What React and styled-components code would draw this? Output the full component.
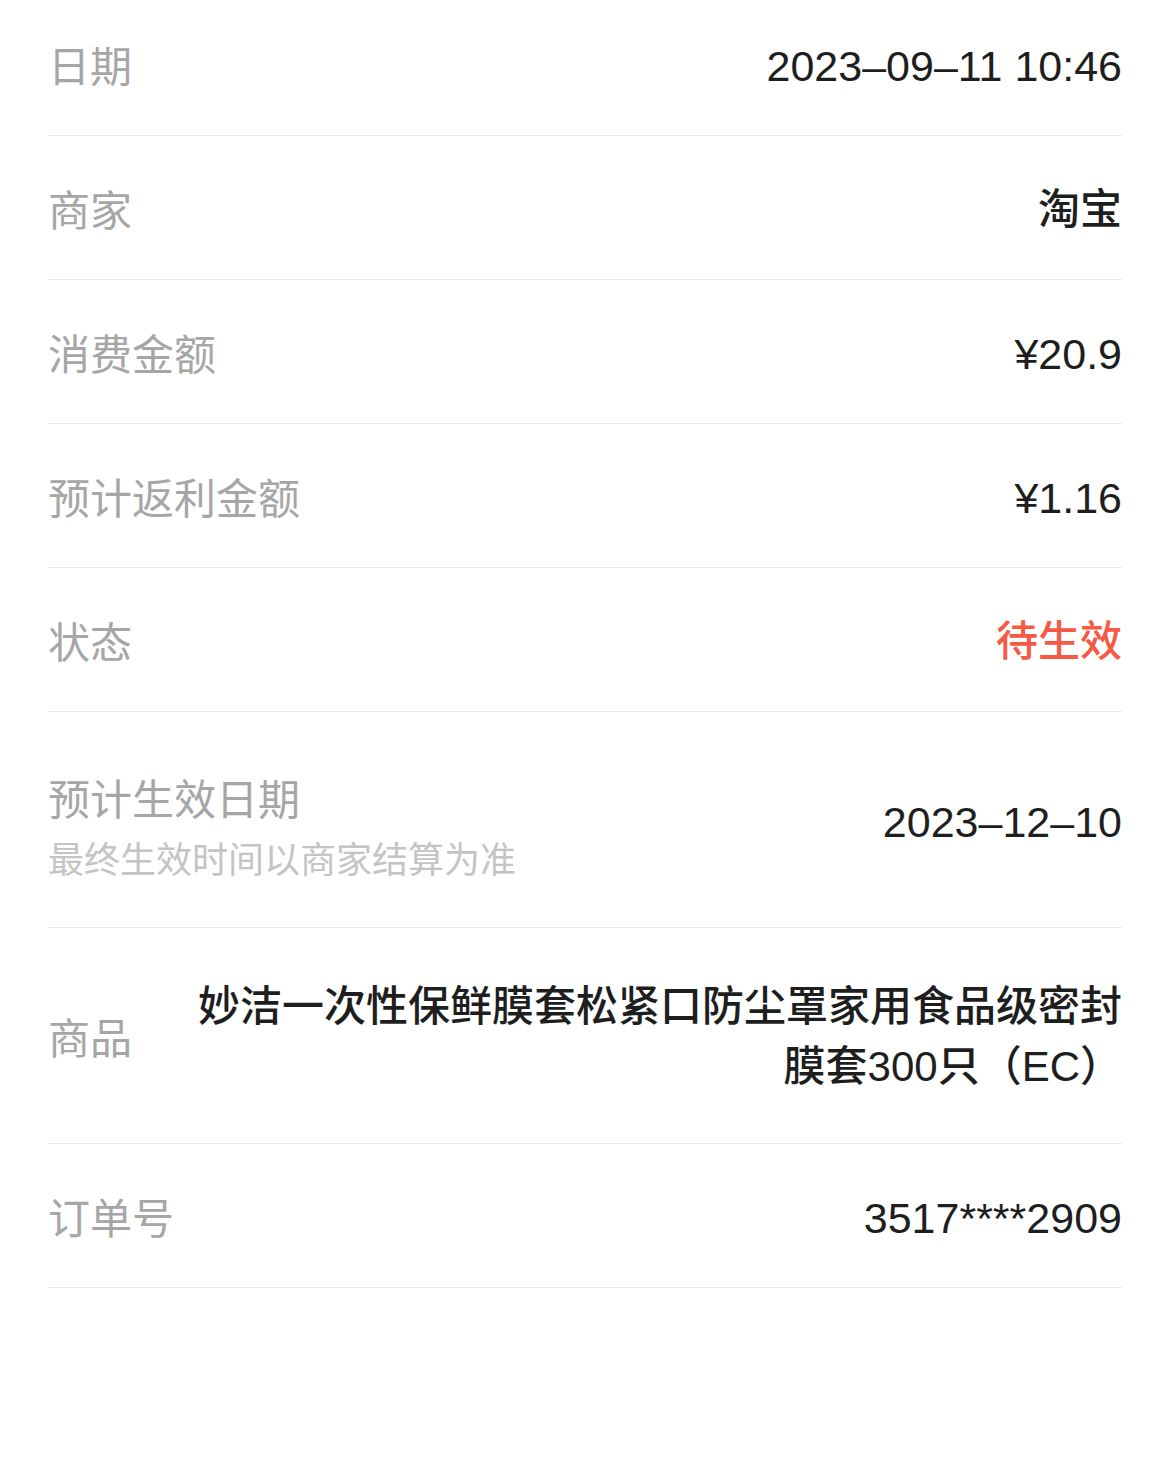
import React from "react";
import styled, { createGlobalStyle } from "styled-components";

const Global = createGlobalStyle`
  html, body { margin: 0; padding: 0; background: #ffffff; }
  body { font-family: "Liberation Sans", "Noto Sans CJK SC", sans-serif; }
`;

const List = styled.div`
  margin-top: -8px;
  padding: 0 48px;
`;

const Row = styled.div`
  display: flex;
  align-items: center;
  justify-content: space-between;
  min-height: ${(p) => (p.$tall ? 216 : 144)}px;
  box-sizing: border-box;
  border-bottom: 1px solid #ebebeb;
  gap: 60px;
`;

const LabelBlock = styled.div`
  display: flex;
  flex-direction: column;
  flex-shrink: 0;
  padding-top: ${(p) => p.$shift || 0}px;
`;

const Label = styled.div`
  font-family: "Noto Sans CJK SC", sans-serif;
  font-size: 42px;
  line-height: 60px;
  color: #a6a6a6;
  white-space: nowrap;
`;

const SubLabel = styled.div`
  font-family: "Noto Sans CJK SC", sans-serif;
  font-size: 36px;
  line-height: 60px;
  color: #c4c4c4;
  white-space: nowrap;
`;

const Value = styled.div`
  font-family: "Liberation Sans", "Noto Sans CJK SC", sans-serif;
  font-size: ${(p) => (p.$num ? 43 : 42)}px;
  line-height: 60px;
  font-weight: 500;
  padding-top: ${(p) => (p.$num ? 5 : p.$wide ? 3 : 4)}px;
  color: ${(p) => (p.$red ? "#f65a44" : "#1e1e1e")};
  text-align: right;
  flex: ${(p) => (p.$wide ? 1 : "0 1 auto")};
`;

const rows = [
  { label: "日期", value: "2023–09–11 10:46", num: true },
  { label: "商家", value: "淘宝" },
  { label: "消费金额", value: "¥20.9", num: true },
  { label: "预计返利金额", value: "¥1.16", num: true },
  { label: "状态", value: "待生效", red: true },
];

export default function App() {
  return (
    <>
      <Global />
      <List>
        {rows.map((r) => (
          <Row key={r.label}>
            <LabelBlock>
              <Label>{r.label}</Label>
            </LabelBlock>
            <Value $red={r.red} $num={r.num}>{r.value}</Value>
          </Row>
        ))}
        <Row $tall>
          <LabelBlock $shift={14}>
            <Label>预计生效日期</Label>
            <SubLabel>最终生效时间以商家结算为准</SubLabel>
          </LabelBlock>
          <Value $num>2023–12–10</Value>
        </Row>
        <Row $tall>
          <LabelBlock>
            <Label>商品</Label>
          </LabelBlock>
          <Value $wide>妙洁一次性保鲜膜套松紧口防尘罩家用食品级密封膜套300只（EC）</Value>
        </Row>
        <Row>
          <LabelBlock>
            <Label>订单号</Label>
          </LabelBlock>
          <Value $num>3517****2909</Value>
        </Row>
      </List>
    </>
  );
}
